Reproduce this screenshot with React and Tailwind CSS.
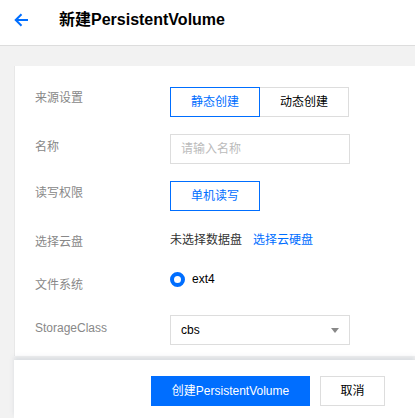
import React from 'react';

const font = { fontFamily: '"Liberation Sans", "Noto Sans CJK SC", sans-serif' };

function Row({ label, labelPad, className, children }) {
  return (
    <div className={`flex ${className}`}>
      <div className={`w-[155px] pl-[20px] text-[12px] leading-[20px] text-[#888] ${labelPad}`}>{label}</div>
      <div className="flex-1">{children}</div>
    </div>
  );
}

export default function App() {
  return (
    <div className="w-[415px] h-[418px] bg-[#f2f2f2] overflow-hidden flex flex-col" style={font}>
      <div className="h-[46px] shrink-0 bg-white border-b border-[#dddddd]">
        <div className="flex items-center h-[39px]">
          <svg className="ml-[14px]" width="15" height="14" viewBox="0 0 15 14" fill="none">
            <path d="M14 7H2M7.5 1.2L1.7 7l5.8 5.8" stroke="#006eff" strokeWidth="2" />
          </svg>
          <h1 className="ml-[30px] text-[16px] font-bold text-black leading-[20px]">新建PersistentVolume</h1>
        </div>
      </div>

      <div className="flex-1 flex flex-col pl-[14px] pt-[20px]">
        <div className="bg-white border-l border-[#e8e8e8] pt-[21px] pb-[11px]">
          <Row label="来源设置" labelPad="pt-[1px]">
            <div className="flex text-[12px]">
              <button className="relative z-10 w-[90px] h-[30px] border border-[#006eff] text-[#006eff] bg-white">静态创建</button>
              <button className="w-[90px] h-[30px] -ml-px border border-[#dddddd] text-black bg-white">动态创建</button>
            </div>
          </Row>
          <Row label="名称" labelPad="pt-[3px]" className="mt-[17px]">
            <div className="w-[180px] h-[30px] border border-[#dddddd] pl-[10px] flex items-center text-[12px] text-[#bbbbbb]">请输入名称</div>
          </Row>
          <Row label="读写权限" labelPad="pt-[2px]" className="mt-[17px]">
            <button className="w-[90px] h-[30px] border border-[#006eff] text-[#006eff] bg-white text-[12px]">单机读写</button>
          </Row>
          <Row label="选择云盘" labelPad="pt-[7px]" className="mt-[14px]">
            <div className="h-[30px] flex items-center text-[12px]">
              <span className="text-[#333]">未选择数据盘</span>
              <span className="ml-[11px] text-[#006eff]">选择云硬盘</span>
            </div>
          </Row>
          <Row label="文件系统" labelPad="pt-[11px]" className="mt-[9px]">
            <div className="h-[30px] flex items-center text-[12px]">
              <span className="w-[15px] h-[15px] rounded-full border-[4px] border-[#006eff] bg-white"></span>
              <span className="ml-[7px] text-black">ext4</span>
            </div>
          </Row>
          <Row label="StorageClass" labelPad="pt-[3px]" className="mt-[20px]">
            <div className="w-[180px] h-[30px] border border-[#dddddd] pl-[10px] pr-[10px] flex items-center justify-between text-[12px] text-black">
              <span>cbs</span>
              <svg width="8" height="5" viewBox="0 0 8 5">
                <path d="M0 0h8L4 5z" fill="#888" />
              </svg>
            </div>
          </Row>
        </div>
        <div className="flex-1 bg-white mt-[4px] shadow-[0_-3px_4px_rgba(150,165,180,0.25)] pt-[16px] pl-[137px] flex items-start gap-[10px] text-[12px]">
          <button className="w-[159px] h-[30px] bg-[#006eff] text-white">创建PersistentVolume</button>
          <button className="w-[65px] h-[30px] border border-[#dddddd] bg-white text-black">取消</button>
        </div>
      </div>
    </div>
  );
}
